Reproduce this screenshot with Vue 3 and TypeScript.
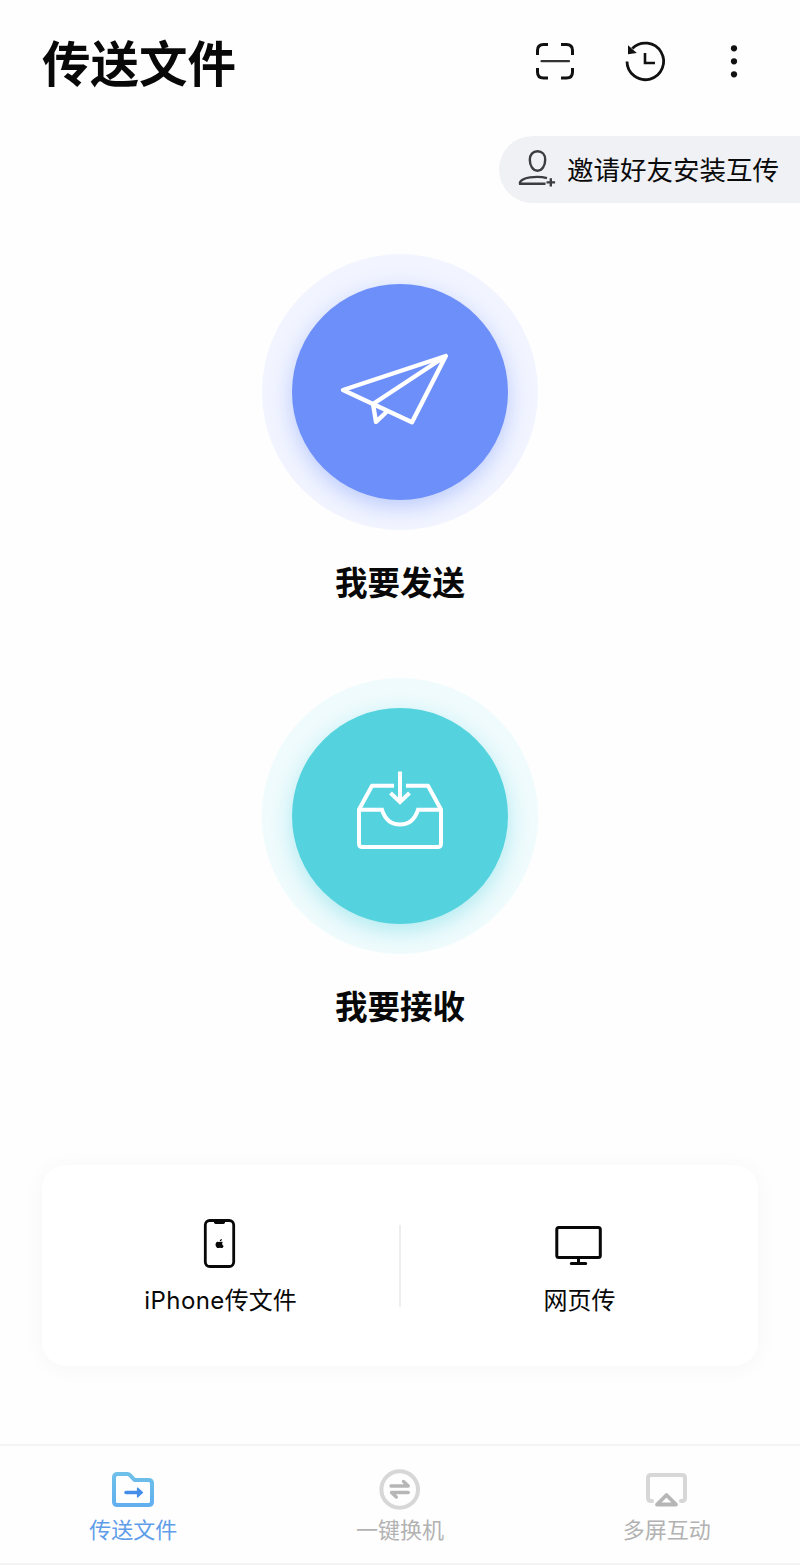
<script setup lang="ts">
interface Tab {
  id: 'files' | 'switch' | 'screen'
  label: string
}

const tabs: Tab[] = [
  { id: 'files', label: '传送文件' },
  { id: 'switch', label: '一键换机' },
  { id: 'screen', label: '多屏互动' },
]
const activeTab: Tab['id'] = 'files'
</script>

<template>
  <div class="screen">
    <header class="header">
      <h1 class="title">传送文件</h1>
      <div class="actions">
        <svg class="action" viewBox="0 0 48 48" fill="none" stroke="#111" stroke-width="3">
          <path d="M6.500 18V13.500Q6.500 7.500 12.500 7.500H17M30 7.500H35.500Q41.500 7.500 41.500 13.500V18M41.500 31V35Q41.500 41 35.500 41H30M17 41H12.500Q6.500 41 6.500 35V31" />
          <path d="M10.500 24.200H38" stroke="#333" stroke-width="2.200" stroke-linecap="round" />
        </svg>
        <svg class="action" viewBox="0 0 48 48" fill="none" stroke="#111" stroke-width="3">
          <path d="M6 24.500A18.300 18.300 0 1 0 11.300 11.500" stroke-width="2.800" />
          <path d="M7 8.200L15.800 16L7 17.300Z" fill="#111" stroke="none" />
          <path d="M24 16V26H34" stroke-width="2.600" />
        </svg>
        <svg class="action" viewBox="0 0 48 48" fill="#111">
          <circle cx="24" cy="11.300" r="3.100" />
          <circle cx="24" cy="24.300" r="3.100" />
          <circle cx="24" cy="37.300" r="3.100" />
        </svg>
      </div>
    </header>

    <div class="invite-row">
      <button class="invite">
        <svg class="invite-icon" viewBox="0 0 38 38" fill="none" stroke="#3c3d40" stroke-width="2.400">
          <path d="M19.500 1.300C24.200 1.300 27.200 4.800 27.200 9.700C27.200 15.500 24.200 20.700 19.500 20.700C14.800 20.700 11.800 15.500 11.800 9.700C11.800 4.800 14.800 1.300 19.500 1.300Z" />
          <path d="M27.500 33.700H2C1.300 30.700 6 28.200 12 27.400C18 26.500 24 26.700 29 28.100" />
          <path d="M32.800 28.200V36.600M28.500 32.400H37.100" />
        </svg>
        <span>邀请好友安装互传</span>
      </button>
    </div>

    <main class="main">
      <section class="transfer">
        <div class="halo send">
          <div class="disc">
            <svg width="140" height="100" viewBox="4.500 2.500 140 100" fill="none" stroke="#fff" stroke-width="4.400" stroke-linejoin="round" stroke-linecap="round">
              <path d="M120.300 16.500L17.500 50.500L86.500 82.800ZM120.300 16.500L47.500 64.500L50.500 82.300L61.500 72" />
            </svg>
          </div>
        </div>
        <h2 class="transfer-label">我要发送</h2>
      </section>
      <section class="transfer">
        <div class="halo receive">
          <div class="disc">
            <svg width="120" height="100" viewBox="0 6 120 100" fill="none" stroke="#fff" stroke-width="4">
              <path d="M54 25.800H32L19 49.500V83.500Q19 87 22.500 87H97.500Q101 87 101 83.500V49.500L88 25.800H66" stroke-linejoin="round" />
              <path d="M19 49.800H42C45 59 51 64.500 60 64.500S75 59 78 49.800H101" />
              <path d="M60 11.500V42M50.500 33L60 42L69.500 33" />
            </svg>
          </div>
        </div>
        <h2 class="transfer-label">我要接收</h2>
      </section>
    </main>

    <section class="card">
      <div class="option">
        <svg class="option-icon" viewBox="1 0 52 52">
          <rect x="11.300" y="2.500" width="28.400" height="46" rx="4.500" fill="none" stroke="#080808" stroke-width="2.800" />
          <path d="M20 3H31V4.300Q31 6 29.300 6H21.700Q20 6 20 4.300Z" fill="#080808" />
          <path d="M28.800 24.100C27.700 23.300 26.800 24 25.800 24C24.800 24 23.800 23.400 22.800 24C20.300 25.600 22 30.100 24 30.100C24.700 30.100 25 29.700 25.800 29.700C26.600 29.700 26.900 30.100 27.600 30.100C28.600 30.100 29.300 28.900 29.600 28C27.800 27 27.900 25 28.800 24.100ZM25.700 23.500C25.700 22 26.600 21.100 27.900 21C27.900 22.500 27 23.400 25.700 23.500Z" fill="#080808" />
        </svg>
        <span class="option-label"><span class="latin">iPhone</span>传文件</span>
      </div>
      <div class="divider"></div>
      <div class="option">
        <svg class="option-icon" viewBox="1 0 52 52" fill="none" stroke="#080808" stroke-width="3">
          <rect x="3.800" y="9.500" width="43.500" height="30" rx="2" />
          <path d="M25.500 40V45.500M18.300 45.500H32.700" stroke-linecap="round" />
        </svg>
        <span class="option-label">网页传</span>
      </div>
    </section>

    <nav class="tabs">
      <a v-for="tab in tabs" :key="tab.id" class="tab" :class="{ active: tab.id === activeTab }">
        <svg v-if="tab.id === 'files'" class="tab-icon" viewBox="0 0 48 44" fill="none">
          <defs>
            <linearGradient id="folder" x1="0" y1="0" x2="0" y2="1">
              <stop offset="0" stop-color="#6fc0e9" />
              <stop offset="1" stop-color="#62aff0" />
            </linearGradient>
          </defs>
          <path d="M8.500 6H18.500Q20 6 21 7.200L25.500 12H39.500Q43 12 43 15.500V33.500Q43 37 39.500 37H8.500Q5 37 5 33.500V9.500Q5 6 8.500 6Z" stroke="url(#folder)" stroke-width="4" stroke-linejoin="round" />
          <path d="M17 24.500H30" stroke="#448ee9" stroke-width="3.500" stroke-linecap="round" />
          <path d="M28.500 20L33.500 24.500L28.500 29Z" fill="#448ee9" stroke="#448ee9" stroke-width="1.200" stroke-linejoin="round" />
        </svg>
        <svg v-else-if="tab.id === 'switch'" class="tab-icon" viewBox="0 0 48 44" fill="none">
          <circle cx="23.700" cy="21.500" r="18.300" stroke="#d7d7d7" stroke-width="4" />
          <path d="M15 18H32.300L27.500 13.500M32.300 24.500H15.500L20.300 29" stroke="#b6b6b6" stroke-width="3.300" stroke-linecap="round" stroke-linejoin="round" />
        </svg>
        <svg v-else class="tab-icon" viewBox="0 0 48 44" fill="none">
          <path d="M9 33H8Q5 33 5 30V10Q5 7 8 7H39Q42 7 42 10V30Q42 33 39 33H38" stroke="#d7d7d7" stroke-width="4" stroke-linecap="round" />
          <path d="M23.500 27.500L33 36.500H14Z" stroke="#fefefe" stroke-width="7" stroke-linejoin="round" />
          <path d="M23.500 27L33 36.500H14Z" stroke="#b6b6b6" stroke-width="3.800" stroke-linejoin="round" />
        </svg>
        <span class="tab-label">{{ tab.label }}</span>
      </a>
    </nav>
  </div>
</template>

<style>
body {
  margin: 0;
  background: #fff;
}
</style>

<style scoped>
.screen {
  display: flex;
  flex-direction: column;
  width: 800px;
  height: 1565px;
  overflow: hidden;
  background: #fefefe;
  color: #080808;
  font-family: "Noto Sans CJK SC", sans-serif;
}

.header {
  display: flex;
  box-sizing: border-box;
  flex: none;
  align-items: center;
  justify-content: space-between;
  height: 128px;
  padding: 0 42px 6px;
}

.title {
  margin: 0;
  font-size: 48.5px;
  font-weight: 700;
  line-height: 72px;
}

.actions {
  display: flex;
  gap: 41.5px;
}

.action {
  width: 48px;
  height: 48px;
}

.invite-row {
  display: flex;
  flex: none;
  justify-content: flex-end;
  padding-top: 8px;
}

.invite {
  display: flex;
  box-sizing: border-box;
  align-items: center;
  gap: 11px;
  width: 301px;
  height: 67px;
  padding: 0 0 1px 19px;
  border: 0;
  border-radius: 34px 0 0 34px;
  background: #f0f1f4;
  color: #0b0b0c;
  font: 400 26.5px/40px "Noto Sans CJK SC", sans-serif;
  white-space: nowrap;
}

.invite-icon {
  flex: none;
  width: 38px;
  height: 38px;
}

.main {
  display: flex;
  flex: none;
  flex-direction: column;
  align-items: center;
  gap: 71px;
  padding-top: 51px;
}

.transfer {
  display: flex;
  flex-direction: column;
  align-items: center;
  height: 353px;
}

.halo {
  display: grid;
  place-items: center;
  flex: none;
  width: 276px;
  height: 276px;
  border-radius: 50%;
}

.disc {
  display: grid;
  place-items: center;
  width: 216px;
  height: 216px;
  border-radius: 50%;
}

.send {
  background: #f2f5ff;
}

.send .disc {
  background: #6d8ff9;
  box-shadow: 0 7px 22px rgba(109, 143, 249, 0.42);
}

.receive {
  background: #f0fbfd;
}

.receive .disc {
  background: #54d3df;
  box-shadow: 0 7px 22px rgba(84, 211, 223, 0.42);
}

.transfer-label {
  margin: 27px 0 0;
  font-size: 32.5px;
  font-weight: 700;
  line-height: 48px;
}

.card {
  display: grid;
  flex: none;
  grid-template-columns: 1fr 2px 1fr;
  align-items: center;
  height: 201px;
  margin: 134px 42px 0;
  border-radius: 24px;
  background: #fff;
  box-shadow: 0 2px 24px rgba(0, 0, 0, 0.035);
}

.option {
  display: flex;
  flex-direction: column;
  align-items: center;
  gap: 11px;
  padding-top: 3px;
}

.option-icon {
  width: 52px;
  height: 52px;
}

.option-label {
  height: 36px;
  font-size: 24px;
  line-height: 36px;
}

.latin {
  font-family: Inter, sans-serif;
  line-height: 1;
  letter-spacing: 0.4px;
}

.divider {
  height: 82px;
  background: #eee;
}

.tabs {
  display: grid;
  box-sizing: border-box;
  flex: none;
  grid-template-columns: repeat(3, 1fr);
  height: 121px;
  margin-top: auto;
  padding-top: 22px;
  border-top: 2px solid #f4f4f4;
  border-bottom: 2px solid #f4f4f4;
}

.tab {
  display: flex;
  flex-direction: column;
  align-items: center;
  color: #b2b2b2;
}

.tab.active {
  color: #609de9;
}

.tab-icon {
  width: 48px;
  height: 44px;
}

.tab-label {
  font-size: 22px;
  line-height: 32px;
}
</style>
